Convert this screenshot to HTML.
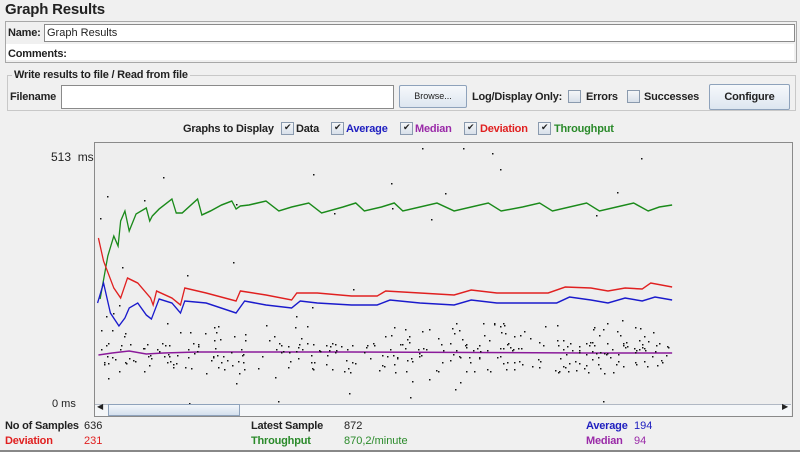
<!DOCTYPE html>
<html><head><meta charset="utf-8"><style>
body{margin:0;width:800px;height:452px;background:#f0f0f0;font-family:"Liberation Sans",Arial,sans-serif;font-size:11px;position:relative;overflow:hidden;color:#222}
.a{position:absolute;white-space:nowrap}
.b{font-weight:bold;letter-spacing:-0.2px}
.cb{position:absolute;width:11px;height:11px;border:1px solid #8a9aae;background:linear-gradient(#f4f6f8,#d8e0ea)}
.ck{position:absolute;font-size:9px;color:#222}
.btn{position:absolute;border:1px solid #8ea2bb;border-radius:2px;background:linear-gradient(#f6f8fb,#dde6f0);text-align:center}
</style></head><body>
<div class="a b" style="left:5px;top:1px;font-size:15px">Graph Results</div>
<div class="a" style="left:5px;top:21px;width:790px;height:40px;border:1px solid #a8a8a8"></div>
<div class="a b" style="left:8px;top:27px">Name:</div>
<div class="a" style="left:44px;top:24px;width:749px;height:16px;border:1px solid #8a8a8a;background:#fff"></div>
<div class="a" style="left:47px;top:27px">Graph Results</div>
<div class="a" style="left:6px;top:44px;width:788px;height:16px;background:#fff"></div>
<div class="a b" style="left:8px;top:48px">Comments:</div>
<div class="a" style="left:7px;top:75px;width:787px;height:34px;border:1px solid #c8c8c8"></div>
<div class="a b" style="left:12px;top:69px;background:#f0f0f0;padding:0 2px">Write results to file / Read from file</div>
<div class="a b" style="left:10px;top:91px">Filename</div>
<div class="a" style="left:61px;top:85px;width:331px;height:22px;border:1px solid #8a8a8a;background:#fff"></div>
<div class="btn" style="left:399px;top:85px;width:66px;height:21px;line-height:21px;font-size:9px">Browse...</div>
<div class="a b" style="left:472px;top:91px">Log/Display Only:</div>
<div class="cb" style="left:568px;top:90px"></div>
<div class="a b" style="left:586px;top:91px">Errors</div>
<div class="cb" style="left:627px;top:90px"></div>
<div class="a b" style="left:644px;top:91px">Successes</div>
<div class="btn b" style="left:709px;top:84px;width:79px;height:24px;line-height:24px">Configure</div>
<div class="a b" style="left:183px;top:123px">Graphs to Display</div>
<div class="cb" style="left:281px;top:122px"></div><div class="ck" style="left:284px;top:122px">✔</div>
<div class="a b" style="left:296px;top:123px">Data</div>
<div class="cb" style="left:331px;top:122px"></div><div class="ck" style="left:334px;top:122px">✔</div>
<div class="a b" style="left:346px;top:123px;color:#2020c0">Average</div>
<div class="cb" style="left:400px;top:122px"></div><div class="ck" style="left:403px;top:122px">✔</div>
<div class="a b" style="left:415px;top:123px;color:#9a2aa8">Median</div>
<div class="cb" style="left:464px;top:122px"></div><div class="ck" style="left:467px;top:122px">✔</div>
<div class="a b" style="left:480px;top:123px;color:#e02020">Deviation</div>
<div class="cb" style="left:538px;top:122px"></div><div class="ck" style="left:541px;top:122px">✔</div>
<div class="a b" style="left:554px;top:123px;color:#2a8a2a">Throughput</div>
<div class="a" style="left:51px;top:150px;font-size:12px">513&nbsp; ms</div>
<div class="a" style="left:52px;top:398px">0 ms</div>
<div class="a" style="left:94px;top:142px;width:697px;height:273px;border:1px solid #8a8a8a;background:#eeeeee"></div>
<svg class="a" style="left:95px;top:143px" width="696" height="261" id="g">
<g transform="scale(0.855,1)">
<polyline fill="none" stroke="#1a8a1a" stroke-width="1.5" transform="translate(0,8)" points="6,148 15,105 22,85 27,95 30,70 35,60 40,80 48,63 60,57 64,70 67,65 75,58 90,48 95,62 102,62 120,48 125,64 135,60 148,54 160,50 165,58 170,55 180,54 200,50 215,60 230,56 250,52 265,62 290,56 305,52 315,60 335,56 350,52 360,60 380,56 400,52 420,60 440,56 460,52 475,60 500,56 520,52 535,60 555,56 575,52 590,60 610,56 630,52 647,60 660,56 675,54"/>
<polyline fill="none" stroke="#e02020" stroke-width="1.5" points="4,95 10,118 22,145 30,155 38,135 50,140 65,155 68,162 72,148 90,155 100,162 105,145 130,150 165,158 170,148 200,152 230,157 236,150 260,150 300,153 330,153 340,148 380,150 420,152 440,147 470,150 510,150 530,150 550,144 580,145 600,148 620,145 640,146 650,140 675,144"/>
<polyline fill="none" stroke="#1a1acc" stroke-width="1.5" points="3,160 10,140 18,170 28,183 35,175 40,165 50,160 60,172 66,176 75,156 90,160 100,170 105,158 130,160 165,170 175,158 200,162 230,165 240,158 260,160 300,162 330,162 345,157 380,160 420,162 440,157 470,160 510,160 540,160 555,154 580,157 600,160 620,155 640,158 655,154 675,157"/>
<polyline fill="none" stroke="#8a1a9a" stroke-width="1.5" points="4,212 20,210 40,208 60,211 80,210 120,209 300,209 575,210 675,210"/>
</g>
</svg>
<script>
var g=document.getElementById('g'),s=7,r=function(){s=(s*16807)%2147483647;return s/2147483647};
var h='';for(var i=0;i<380;i++){var x=5+r()*570,y;var q=r();if(q<0.6)y=200+r()*30;else if(q<0.85)y=180+r()*30;else y=r()*260;h+='<rect x="'+x.toFixed(0)+'" y="'+y.toFixed(0)+'" width="1.5" height="1.5" fill="#111"/>';}
g.innerHTML+=h;
</script>
<div class="a" style="left:95px;top:404px;width:696px;height:11px;background:#f4f6f8;border-top:1px solid #b0b8c4"></div>
<div class="a" style="left:108px;top:404px;width:130px;height:10px;border:1px solid #8ea2bb;background:linear-gradient(#f2f6fa,#d4e0ee)"></div>
<div class="a" style="left:97px;top:402px;font-size:8px">◀</div>
<div class="a" style="left:782px;top:402px;font-size:8px">▶</div>
<div class="a b" style="left:5px;top:420px">No of Samples</div><div class="a" style="left:84px;top:420px">636</div>
<div class="a b" style="left:5px;top:435px;color:#e02020">Deviation</div><div class="a" style="left:84px;top:435px;color:#e02020">231</div>
<div class="a b" style="left:251px;top:420px">Latest Sample</div><div class="a" style="left:344px;top:420px">872</div>
<div class="a b" style="left:251px;top:435px;color:#2a8a2a">Throughput</div><div class="a" style="left:344px;top:435px;color:#2a8a2a">870,2/minute</div>
<div class="a b" style="left:586px;top:420px;color:#2020c0">Average</div><div class="a" style="left:634px;top:420px;color:#2020c0">194</div>
<div class="a b" style="left:586px;top:435px;color:#9a2aa8">Median</div><div class="a" style="left:634px;top:435px;color:#9a2aa8">94</div>
<div class="a" style="left:0;top:450px;width:800px;height:2px;background:#888"></div>
</body></html>
